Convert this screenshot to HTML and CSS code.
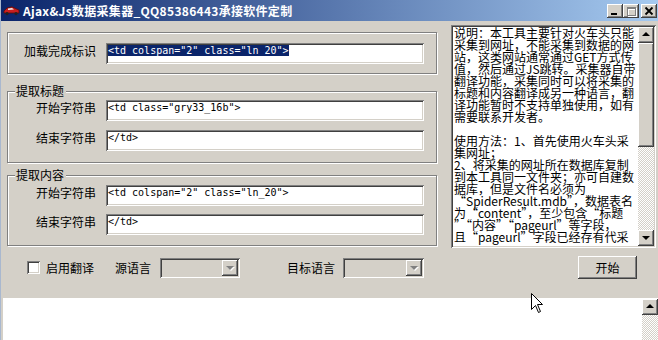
FILE: index.html
```html
<!DOCTYPE html>
<html lang="zh-CN">
<head>
  <meta charset="UTF-8">
  <title>Ajax&amp;Js数据采集器</title>
  <link rel="stylesheet" href="styles.css">
</head>
<body>
  <div class="window">
    <!-- 标题栏 -->
    <div class="titlebar">
      <svg class="app-icon" width="17" height="11" viewBox="0 0 17 11">
        <path d="M1 6 L4 3 L9 1.8 L13 3.8 L16 5 L16 8 L1 8 Z" fill="#c81e1e" stroke="#5a0a0a" stroke-width="0.8"/>
        <path d="M5 3.6 L9 3 L11 4.6 L5 4.9 Z" fill="#f0f0f0"/>
        <circle cx="4" cy="8.6" r="1.6" fill="#222"/>
        <circle cx="13" cy="8.6" r="1.6" fill="#222"/>
      </svg>
      <span class="title">Ajax&amp;Js数据采集器_QQ85386443承接软件定制</span>
      <div class="caption-buttons">
        <span class="cap-btn">
          <svg width="16" height="14"><rect x="4" y="9" width="6" height="2" fill="#000"/></svg>
        </span>
        <span class="cap-btn">
          <svg width="16" height="14">
            <path d="M5 4 h9 v9 h-9 z M6 6 v6 h7 v-6 z" fill="#fff" fill-rule="evenodd"/>
            <path d="M4 3 h9 v9 h-9 z M5 5 v6 h7 v-6 z" fill="#808080" fill-rule="evenodd"/>
          </svg>
        </span>
        <span class="cap-btn cap-close">
          <svg width="16" height="14"><path d="M4.5 3.5 L11.5 10.5 M11.5 3.5 L4.5 10.5" stroke="#000" stroke-width="1.8"/></svg>
        </span>
      </div>
    </div>

    <div class="client">
      <div class="main">
        <div class="left">
          <div class="group group-load">
            <div class="row">
              <label>加载完成标识</label>
              <div class="edit"><span class="sel">&lt;td colspan="2" class="ln_20"&gt;</span></div>
            </div>
          </div>

          <div class="group group-title">
            <span class="legend">提取标题</span>
            <div class="row">
              <label>开始字符串</label>
              <div class="edit">&lt;td class="gry33_16b"&gt;</div>
            </div>
            <div class="row">
              <label>结束字符串</label>
              <div class="edit">&lt;/td&gt;</div>
            </div>
          </div>

          <div class="group group-content">
            <span class="legend">提取内容</span>
            <div class="row">
              <label>开始字符串</label>
              <div class="edit">&lt;td colspan="2" class="ln_20"&gt;</div>
            </div>
            <div class="row">
              <label>结束字符串</label>
              <div class="edit">&lt;/td&gt;</div>
            </div>
          </div>
        </div>

        <div class="memo">
          <div class="memo-text">说明：本工具主要针对火车头只能
采集到网址，不能采集到数据的网
站，这类网站通常通过GET方式传
值，然后通过JS跳转。采集器自带
翻译功能，采集同时可以将采集的
标题和内容翻译成另一种语言，翻
译功能暂时不支持单独使用，如有
需要联系开发者。

使用方法：1、首先使用火车头采
集网址；
2、将采集的网址所在数据库复制
到本工具同一文件夹；亦可自建数
据库，但是文件名必须为
“SpiderResult.mdb”，数据表名
为“content”，至少包含“标题
”“内容”“pageurl”等字段，
且“pageurl”字段已经存有代采</div>
          <div class="vscroll">
            <span class="sb-btn sb-up"></span>
            <span class="sb-thumb"></span>
            <span class="sb-track"></span>
            <span class="sb-btn sb-down"></span>
          </div>
        </div>
      </div>

      <div class="options">
        <span class="checkbox"></span>
        <span class="opt-label">启用翻译</span>
        <span class="opt-label lang-src">源语言</span>
        <span class="combo"><span class="combo-btn"></span></span>
        <span class="opt-label lang-dst">目标语言</span>
        <span class="combo combo-dst"><span class="combo-btn"></span></span>
        <span class="button">开始</span>
      </div>
    </div>

    <div class="log">
      <div class="vscroll">
        <span class="sb-btn sb-up"></span>
        <span class="sb-track"></span>
      </div>
    </div>

    <svg class="cursor" width="13" height="21" viewBox="0 0 13 21">
      <path d="M0.5 0.5 L0.5 16.5 L4.5 12.5 L7.5 19.5 L9.5 18.5 L6.5 11.5 L11.5 11.5 Z" fill="#fff" stroke="#000" stroke-width="1"/>
    </svg>
  </div>
</body>
</html>
```

FILE: styles.css
```css
* {
  box-sizing: border-box;
}

body {
  margin: 0;
  background: #d4d0c8;
  font-family: "Noto Sans CJK SC", sans-serif;
  font-size: 12px;
  color: #000;
}

.window {
  position: relative;
  width: 658px;
  height: 340px;
  overflow: hidden;
  border-left: 1px solid #a9b8cf;
}

/* 标题栏 */
.titlebar {
  display: flex;
  align-items: center;
  height: 21px;
  padding: 0 1px 0 2px;
  background: linear-gradient(to right, #0a246a, #a6caf0);
  color: #fff;
}

.app-icon {
  margin-right: 3px;
}

.title {
  font-weight: bold;
  line-height: 14px;
  letter-spacing: 0.3px;
}

.caption-buttons {
  display: flex;
  margin-left: auto;
}

.cap-btn {
  display: block;
  width: 16px;
  height: 14px;
  background: #d4d0c8;
  box-shadow: inset -1px -1px #404040, inset 1px 1px #fff, inset -2px -2px #808080;
}

.cap-btn svg {
  display: block;
}

.cap-close {
  margin-left: 2px;
}

/* 主体 */
.client {
  padding: 0 0 19px 6px;
}

.main {
  display: flex;
  align-items: flex-start;
}

.left {
  width: 430px;
  padding-top: 11px;
}

.group {
  position: relative;
  border: 1px solid #808080;
  box-shadow: inset 1px 1px #fff, 1px 1px #fff;
  padding-right: 12px;
}

.group-load {
  padding-top: 10px;
  padding-bottom: 9px;
}

.group-title {
  margin-top: 17px;
  padding-top: 8px;
  padding-bottom: 11px;
}

.group-title .row + .row {
  margin-top: 9px;
}

.group-content {
  margin-top: 12px;
  padding-top: 9px;
  padding-bottom: 10px;
}

.group-content .row + .row {
  margin-top: 8px;
}

.legend {
  position: absolute;
  top: -7px;
  left: 7px;
  padding: 0 2px 0 1px;
  background: #d4d0c8;
  line-height: 12px;
}

.row {
  display: flex;
  align-items: flex-start;
}

.row label {
  width: 88px;
  margin-right: 10px;
  padding-top: 2px;
  text-align: right;
  line-height: 12px;
}

.edit {
  width: 318px;
  height: 21px;
  padding: 2px;
  background: #fff;
  box-shadow: inset 1px 1px #808080, inset -1px -1px #fff, inset 2px 2px #404040, inset -2px -2px #d4d0c8;
  font-family: "DejaVu Sans Mono", monospace;
  font-size: 10px;
  line-height: 12px;
  white-space: pre;
}

.sel {
  background: #0a246a;
  color: #fff;
}

/* 说明文本框 */
.memo {
  display: flex;
  width: 205px;
  height: 223px;
  margin: 4px 0 0 14px;
  padding: 2px;
  background: #fff;
  box-shadow: inset 1px 1px #808080, inset -1px -1px #fff, inset 2px 2px #404040, inset -2px -2px #d4d0c8;
}

.memo-text {
  flex: 1;
  padding-left: 1px;
  line-height: 12px;
  white-space: pre;
}

.vscroll {
  display: flex;
  flex-direction: column;
  width: 16px;
}

.sb-btn,
.sb-thumb {
  position: relative;
  display: block;
  height: 16px;
  background: #d4d0c8;
  box-shadow: inset -1px -1px #404040, inset 1px 1px #fff, inset -2px -2px #808080;
}

.sb-thumb {
  height: 104px;
}

.sb-btn::after {
  content: "";
  position: absolute;
  left: 4px;
  border: 4px solid transparent;
}

.sb-up::after {
  top: 5px;
  border-top-width: 0;
  border-bottom-color: #000;
}

.sb-down::after {
  top: 6px;
  border-bottom-width: 0;
  border-top-color: #000;
}

.sb-track {
  display: block;
  flex: 1;
  background: repeating-conic-gradient(#fff 0 25%, #d4d0c8 0 50%) 0 0 / 2px 2px;
}

/* 翻译选项 */
.options {
  display: flex;
  align-items: center;
  height: 23px;
  margin-top: 8px;
  padding-left: 20px;
  line-height: 12px;
}

.checkbox {
  width: 13px;
  height: 13px;
  margin-right: 6px;
  background: #fff;
  box-shadow: inset 1px 1px #808080, inset -1px -1px #fff, inset 2px 2px #404040, inset -2px -2px #d4d0c8;
}

.lang-src {
  margin-left: 21px;
  margin-right: 9px;
}

.lang-dst {
  margin-left: 47px;
  margin-right: 8px;
}

.combo {
  display: flex;
  justify-content: flex-end;
  width: 80px;
  height: 20px;
  padding: 2px;
  background: #d4d0c8;
  box-shadow: inset 1px 1px #808080, inset -1px -1px #fff, inset 2px 2px #404040, inset -2px -2px #d4d0c8;
}

.combo-dst {
  width: 81px;
}

.combo-btn {
  position: relative;
  width: 16px;
  height: 16px;
  box-shadow: inset -1px -1px #404040, inset 1px 1px #fff, inset -2px -2px #808080;
}

.combo-btn::after {
  content: "";
  position: absolute;
  left: 4px;
  top: 6px;
  border: 4px solid transparent;
  border-bottom-width: 0;
  border-top-color: #808080;
  filter: drop-shadow(1px 1px 0 #fff);
}

.button {
  display: flex;
  align-items: center;
  justify-content: center;
  width: 59px;
  height: 23px;
  margin-left: 154px;
  background: #d4d0c8;
  box-shadow: inset -1px -1px #404040, inset 1px 1px #fff, inset -2px -2px #808080;
}

/* 底部日志框 */
.log {
  display: flex;
  justify-content: flex-end;
  height: 42px;
  margin-left: 2px;
  background: #fff;
}

.log .vscroll {
  margin-top: 1px;
}

.cursor {
  position: absolute;
  left: 530px;
  top: 293px;
}
```
